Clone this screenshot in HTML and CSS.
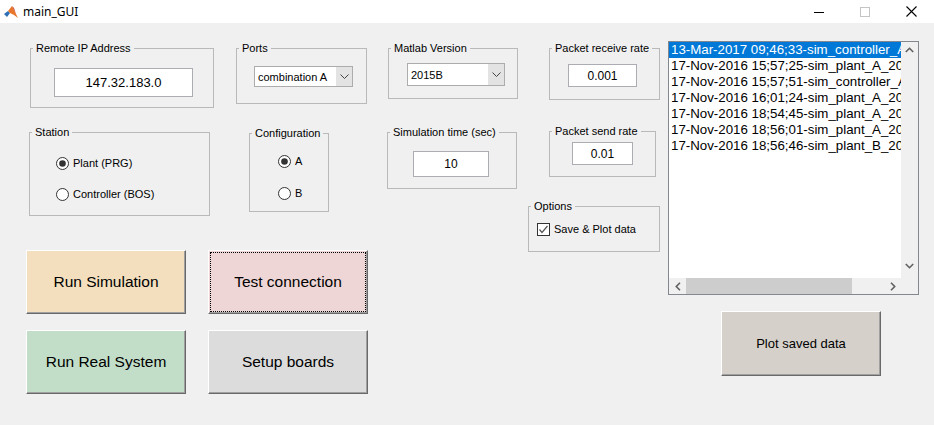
FILE: index.html
```html
<!DOCTYPE html>
<html lang="en">
<head>
<meta charset="utf-8">
<title>main_GUI</title>
<link rel="stylesheet" href="styles.css">
</head>
<body>
<div class="window">
  <header class="titlebar">
    <svg class="app-icon" width="14" height="14" viewBox="0 0 14 14">
      <polygon points="0,9 4,6 6,8 3,12" fill="#2d6fb5"/>
      <polygon points="4,6 8,1 11,7 14,13 10,10 6,8" fill="#e8762b"/>
      <polygon points="8,1 10,3 12,9 14,13 11,7" fill="#c0392b"/>
    </svg>
    <span class="title">main_GUI</span>
    <div class="winctrls">
      <span class="wc"><svg width="10" height="10" viewBox="0 0 10 10"><line x1="0" y1="5.5" x2="10" y2="5.5" stroke="#000" stroke-width="1"/></svg></span>
      <span class="wc"><svg width="10" height="10" viewBox="0 0 10 10"><rect x="0.5" y="0.5" width="9" height="9" fill="none" stroke="#c4c4c4" stroke-width="1"/></svg></span>
      <span class="wc"><svg width="11" height="11" viewBox="0 0 11 11"><path d="M0.5 0.5 L10.5 10.5 M10.5 0.5 L0.5 10.5" stroke="#000" stroke-width="1.1"/></svg></span>
    </div>
  </header>

  <main class="client">
    <div class="block-a">
      <div class="panel-row">
        <div class="col col1">
          <fieldset class="panel p-ip">
            <legend>Remote IP Address</legend>
            <div class="edit e-ip">147.32.183.0</div>
          </fieldset>
          <fieldset class="panel p-station">
            <legend>Station</legend>
            <div class="radios r-station">
              <div class="radio-row">
                <svg class="radio" width="13" height="13" viewBox="0 0 13 13"><circle cx="6.5" cy="6.5" r="6" fill="#fff" stroke="#333"/><circle cx="6.5" cy="6.5" r="3.3" fill="#333"/></svg>
                <span>Plant (PRG)</span>
              </div>
              <div class="radio-row">
                <svg class="radio" width="13" height="13" viewBox="0 0 13 13"><circle cx="6.5" cy="6.5" r="6" fill="#fff" stroke="#333"/></svg>
                <span>Controller (BOS)</span>
              </div>
            </div>
          </fieldset>
        </div>
        <div class="col col2">
          <fieldset class="panel p-ports">
            <legend>Ports</legend>
            <div class="dropdown dd-ports">
              <span class="dd-text">combination A</span>
              <span class="dd-arrow"><svg width="9" height="5" viewBox="0 0 9 5"><path d="M0.5 0.5 L4.5 4.5 L8.5 0.5" fill="none" stroke="#444" stroke-width="1"/></svg></span>
            </div>
          </fieldset>
          <fieldset class="panel p-config">
            <legend>Configuration</legend>
            <div class="radios r-config">
              <div class="radio-row">
                <svg class="radio" width="13" height="13" viewBox="0 0 13 13"><circle cx="6.5" cy="6.5" r="6" fill="#fff" stroke="#333"/><circle cx="6.5" cy="6.5" r="3.3" fill="#333"/></svg>
                <span>A</span>
              </div>
              <div class="radio-row">
                <svg class="radio" width="13" height="13" viewBox="0 0 13 13"><circle cx="6.5" cy="6.5" r="6" fill="#fff" stroke="#333"/></svg>
                <span>B</span>
              </div>
            </div>
          </fieldset>
        </div>
      </div>
      <div class="btn-grid">
        <button class="btn big b-sim">Run Simulation</button>
        <button class="btn big b-test">Test connection</button>
        <button class="btn big b-real">Run Real System</button>
        <button class="btn big b-setup">Setup boards</button>
      </div>
    </div>

    <div class="col col3">
      <fieldset class="panel p-matlab">
        <legend>Matlab Version</legend>
        <div class="dropdown dd-matlab">
          <span class="dd-text">2015B</span>
          <span class="dd-arrow"><svg width="9" height="5" viewBox="0 0 9 5"><path d="M0.5 0.5 L4.5 4.5 L8.5 0.5" fill="none" stroke="#444" stroke-width="1"/></svg></span>
        </div>
      </fieldset>
      <fieldset class="panel p-sim">
        <legend>Simulation time (sec)</legend>
        <div class="edit e-sim">10</div>
      </fieldset>
    </div>

    <div class="col col4">
      <fieldset class="panel p-recv">
        <legend>Packet receive rate</legend>
        <div class="edit e-recv">0.001</div>
      </fieldset>
      <fieldset class="panel p-send">
        <legend>Packet send rate</legend>
        <div class="edit e-send">0.01</div>
      </fieldset>
      <fieldset class="panel p-options">
        <legend>Options</legend>
        <div class="check-row">
          <svg class="check" width="13" height="13" viewBox="0 0 13 13"><rect x="0.5" y="0.5" width="12" height="12" fill="#fff" stroke="#333"/><path d="M2.5 6.5 L5 9.5 L10.5 3" fill="none" stroke="#555" stroke-width="1.2"/></svg>
          <span>Save &amp; Plot data</span>
        </div>
      </fieldset>
    </div>

    <div class="col col5">
      <div class="listbox">
        <div class="list-items">
          <div class="item selected">13-Mar-2017 09;46;33-sim_controller_A_2017</div>
          <div class="item">17-Nov-2016 15;57;25-sim_plant_A_2016</div>
          <div class="item">17-Nov-2016 15;57;51-sim_controller_A_2016</div>
          <div class="item">17-Nov-2016 16;01;24-sim_plant_A_2016</div>
          <div class="item">17-Nov-2016 18;54;45-sim_plant_A_2016</div>
          <div class="item">17-Nov-2016 18;56;01-sim_plant_A_2016</div>
          <div class="item">17-Nov-2016 18;56;46-sim_plant_B_2016</div>
        </div>
        <div class="vscroll">
          <svg width="9" height="6" viewBox="0 0 9 6"><path d="M0.8 5 L4.5 1.3 L8.2 5" fill="none" stroke="#606060" stroke-width="1.6"/></svg>
          <svg width="9" height="6" viewBox="0 0 9 6"><path d="M0.8 1 L4.5 4.7 L8.2 1" fill="none" stroke="#606060" stroke-width="1.6"/></svg>
        </div>
        <div class="hscroll">
          <span class="harrow"><svg width="6" height="9" viewBox="0 0 6 9"><path d="M5 0.8 L1.3 4.5 L5 8.2" fill="none" stroke="#606060" stroke-width="1.6"/></svg></span>
          <span class="thumb"></span>
          <span class="htrack"></span>
          <span class="harrow"><svg width="6" height="9" viewBox="0 0 6 9"><path d="M1 0.8 L4.7 4.5 L1 8.2" fill="none" stroke="#606060" stroke-width="1.6"/></svg></span>
        </div>
        <div class="corner"></div>
      </div>
      <button class="btn b-plot">Plot saved data</button>
    </div>
  </main>
</div>
</body>
</html>
```

FILE: styles.css
```css
* { box-sizing: border-box; }

html, body {
  margin: 0;
  padding: 0;
}

body {
  width: 934px;
  height: 425px;
  overflow: hidden;
  font-family: "Liberation Sans", Arial, sans-serif;
  color: #000;
  background: #f0f0f0;
}

.window {
  width: 934px;
  height: 425px;
  display: flex;
  flex-direction: column;
}

/* Title bar */
.titlebar {
  height: 23px;
  background: #fff;
  display: flex;
  align-items: center;
  padding-left: 4px;
}

.app-icon {
  display: block;
  margin-top: 1px;
}

.title {
  margin-left: 5px;
  font-size: 12px;
  font-family: "Noto Sans", "Liberation Sans", sans-serif;
  color: #000;
}

.winctrls {
  margin-left: auto;
  display: flex;
  height: 23px;
}

.wc {
  width: 46px;
  height: 23px;
  display: flex;
  align-items: center;
  justify-content: center;
}

.wc svg { display: block; }

/* Client area */
.client {
  height: 402px;
  background: #f0f0f0;
  display: flex;
  align-items: flex-start;
  padding-left: 26px;
}

.block-a {
  width: 342px;
  display: flex;
  flex-direction: column;
}

.panel-row {
  display: flex;
  align-items: flex-start;
}

.col {
  display: flex;
  flex-direction: column;
  align-items: flex-start;
}

.col1 { width: 188px; }
.col2 { width: 154px; }
.col3 { width: 150px; }
.col4 { width: 142px; }
.col5 { width: 274px; }

/* Panels */
.panel {
  margin: 0;
  padding: 0;
  min-width: 0;
  border: 1px solid #b9b9b9;
}

.panel legend {
  font-size: 11px;
  line-height: 13px;
  padding: 0 3px;
  margin-left: 2px;
  color: #000;
  white-space: nowrap;
}

.p-ip      { margin: 19px 0 0 4px;  width: 184px; height: 66px; padding-top: 13px; }
.p-station { margin: 18px 0 0 3px;  width: 181px; height: 90px; padding-top: 16px; }
.p-ports   { margin: 19px 0 0 22px; width: 131px; height: 62px; padding-top: 11px; }
.p-config  { margin: 23px 0 0 35px; width: 80px;  height: 85px; padding-top: 13px; }
.p-matlab  { margin: 19px 0 0 20px; width: 130px; height: 57px; padding-top: 8px; }
.p-sim     { margin: 27px 0 0 19px; width: 130px; height: 63px; padding-top: 12px; }
.p-recv    { margin: 19px 0 0 31px; width: 111px; height: 58px; padding-top: 9px; }
.p-send    { margin: 25px 0 0 31px; width: 107px; height: 52px; padding-top: 4px; }
.p-options { margin: 23px 0 0 10px; width: 132px; height: 52px; padding-top: 8px; }

/* Edit boxes */
.edit {
  background: #fff;
  border: 1px solid #abadb3;
  display: flex;
  align-items: center;
  justify-content: center;
  font-size: 12px;
  color: #000;
}

.e-ip   { width: 139px; height: 29px; font-size: 13px; margin-left: 23px; }
.e-sim  { width: 76px;  height: 26px; margin-left: 25px; }
.e-recv { width: 69px;  height: 23px; margin-left: 18px; }
.e-send { width: 61px;  height: 23px; margin-left: 22px; }

/* Dropdowns */
.dropdown {
  background: #fff;
  border: 1px solid #acacac;
  display: flex;
  align-items: stretch;
  font-size: 11px;
}

.dd-ports  { width: 99px; height: 21px; margin-left: 17px; }
.dd-matlab { width: 98px; height: 23px; margin-left: 18px; }

.dd-text {
  flex: 1;
  display: flex;
  align-items: center;
  padding-left: 3px;
}

.dd-arrow {
  width: 16px;
  background: #e3e3e3;
  display: flex;
  align-items: center;
  justify-content: center;
}

.dd-arrow svg { display: block; }

/* Radios / checkbox */
.radios {
  display: flex;
  flex-direction: column;
}

.r-station { gap: 15px; margin-left: 26px; }
.r-config  { gap: 16px; margin-left: 28px; }

.radio-row,
.check-row {
  height: 16px;
  display: flex;
  align-items: center;
  gap: 4px;
  font-size: 11px;
}

.check-row { margin-left: 8px; }

.radio, .check { display: block; flex: none; }

/* Buttons */
.btn {
  margin: 0;
  padding: 0;
  font-family: "Liberation Sans", Arial, sans-serif;
  color: #000;
  border: 1px solid;
  border-color: #ffffff #696969 #696969 #ffffff;
  box-shadow: inset -1px -1px 0 #a0a0a0;
  display: flex;
  align-items: center;
  justify-content: center;
}

.btn-grid {
  margin-top: 34px;
  display: grid;
  grid-template-columns: 160px 160px;
  grid-auto-rows: 64px;
  column-gap: 22px;
  row-gap: 16px;
}

.big { font-size: 15.5px; }

.b-sim   { background: #f3dfbe; }
.b-test  { background: #eed6d6; outline: 1px dotted #000; outline-offset: -3px; }
.b-real  { background: #c2dec8; }
.b-setup { background: #dcdcdc; }

.b-plot {
  margin: 16px 0 0 61px;
  width: 160px;
  height: 65px;
  font-size: 13px;
  background: #d5d1ca;
}

/* Listbox */
.listbox {
  margin: 18px 0 0 8px;
  width: 251px;
  height: 254px;
  border: 1px solid #828790;
  display: grid;
  grid-template-columns: 232px 17px;
  grid-template-rows: 236px 16px;
  background: #fff;
}

.list-items {
  background: #fff;
  overflow: hidden;
  font-size: 13.3px;
  line-height: 16px;
}

.item {
  white-space: nowrap;
  padding-left: 2px;
  color: #000;
}

.item.selected {
  background: #0078d7;
  color: #fff;
}

.vscroll {
  background: #f0f0f0;
  display: flex;
  flex-direction: column;
  justify-content: space-between;
  align-items: center;
  padding: 5px 0 9px;
}

.vscroll svg, .harrow svg { display: block; }

.hscroll {
  background: #f0f0f0;
  display: flex;
  align-items: stretch;
}

.harrow {
  width: 17px;
  flex: none;
  display: flex;
  align-items: center;
  justify-content: center;
}

.thumb {
  width: 166px;
  flex: none;
  background: #cdcdcd;
}

.htrack { flex: 1; }

.corner {
  background: #f0f0f0;
}
```
